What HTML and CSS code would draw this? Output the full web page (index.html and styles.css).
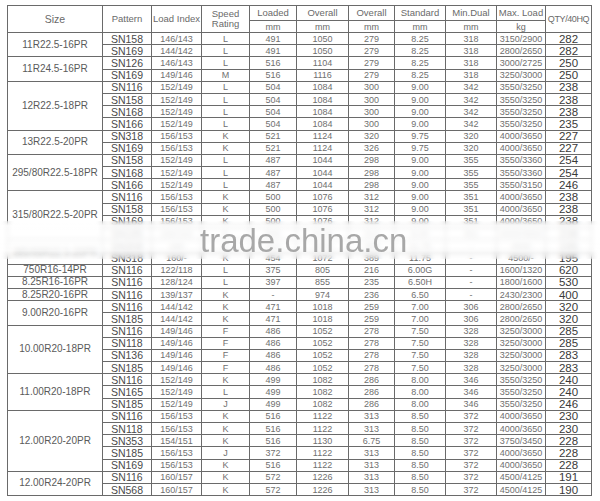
FILE: index.html
```html
<!DOCTYPE html>
<html>
<head>
<meta charset="utf-8">
<link rel="stylesheet" href="styles.css">
</head>
<body>
<div class="page">
<table class="spec">
<colgroup>
<col class="c-size"><col class="c-pat"><col class="c-li"><col class="c-sp"><col class="c-ld"><col class="c-ov1"><col class="c-ov2"><col class="c-std"><col class="c-md"><col class="c-ml"><col class="c-qty">
</colgroup>
<thead>
<tr class="h1">
<th rowspan="2" class="hsize">Size</th><th rowspan="2">Pattern</th><th rowspan="2">Load Index</th><th rowspan="2">Speed<br>Rating</th><th>Loaded</th><th>Overall</th><th>Overall</th><th>Standard</th><th>Min.Dual</th><th>Max. Load</th><th rowspan="2" class="hqty">QTY/40HQ</th>
</tr>
<tr class="h2"><th>mm</th><th>mm</th><th>mm</th><th>mm</th><th>mm</th><th>kg</th></tr>
</thead>
<tbody>
<tr><td rowspan="2" class="sz">11R22.5-16PR</td><td class="pt">SN158</td><td>146/143</td><td>L</td><td>491</td><td>1050</td><td>279</td><td>8.25</td><td>318</td><td>3150/2900</td><td class="q">282</td></tr>
<tr><td class="pt">SN169</td><td>144/142</td><td>L</td><td>491</td><td>1050</td><td>279</td><td>8.25</td><td>318</td><td>2800/2650</td><td class="q">282</td></tr>
<tr><td rowspan="2" class="sz">11R24.5-16PR</td><td class="pt">SN126</td><td>146/143</td><td>L</td><td>516</td><td>1104</td><td>279</td><td>8.25</td><td>318</td><td>3000/2725</td><td class="q">250</td></tr>
<tr><td class="pt">SN169</td><td>149/146</td><td>M</td><td>516</td><td>1116</td><td>279</td><td>8.25</td><td>318</td><td>3250/3000</td><td class="q">250</td></tr>
<tr><td rowspan="4" class="sz">12R22.5-18PR</td><td class="pt">SN116</td><td>152/149</td><td>L</td><td>504</td><td>1084</td><td>300</td><td>9.00</td><td>342</td><td>3550/3250</td><td class="q">238</td></tr>
<tr><td class="pt">SN158</td><td>152/149</td><td>L</td><td>504</td><td>1084</td><td>300</td><td>9.00</td><td>342</td><td>3550/3250</td><td class="q">238</td></tr>
<tr><td class="pt">SN168</td><td>152/149</td><td>L</td><td>504</td><td>1084</td><td>300</td><td>9.00</td><td>342</td><td>3550/3250</td><td class="q">238</td></tr>
<tr><td class="pt">SN166</td><td>152/149</td><td>L</td><td>504</td><td>1084</td><td>300</td><td>9.00</td><td>342</td><td>3550/3250</td><td class="q">235</td></tr>
<tr><td rowspan="2" class="sz">13R22.5-20PR</td><td class="pt">SN318</td><td>156/153</td><td>K</td><td>521</td><td>1124</td><td>320</td><td>9.75</td><td>320</td><td>4000/3650</td><td class="q">227</td></tr>
<tr><td class="pt">SN169</td><td>156/153</td><td>K</td><td>521</td><td>1124</td><td>326</td><td>9.75</td><td>320</td><td>4000/3650</td><td class="q">227</td></tr>
<tr><td rowspan="3" class="sz">295/80R22.5-18PR</td><td class="pt">SN158</td><td>152/149</td><td>L</td><td>487</td><td>1044</td><td>298</td><td>9.00</td><td>355</td><td>3550/3360</td><td class="q">254</td></tr>
<tr><td class="pt">SN168</td><td>152/149</td><td>L</td><td>487</td><td>1044</td><td>298</td><td>9.00</td><td>355</td><td>3550/3360</td><td class="q">254</td></tr>
<tr><td class="pt">SN166</td><td>152/149</td><td>L</td><td>487</td><td>1044</td><td>298</td><td>9.00</td><td>355</td><td>3550/3150</td><td class="q">246</td></tr>
<tr><td rowspan="4" class="sz">315/80R22.5-20PR</td><td class="pt">SN116</td><td>156/153</td><td>K</td><td>500</td><td>1076</td><td>312</td><td>9.00</td><td>351</td><td>4000/3650</td><td class="q">238</td></tr>
<tr><td class="pt">SN158</td><td>156/153</td><td>K</td><td>500</td><td>1076</td><td>312</td><td>9.00</td><td>351</td><td>4000/3650</td><td class="q">238</td></tr>
<tr><td class="pt">SN169</td><td>156/153</td><td>K</td><td>500</td><td>1076</td><td>312</td><td>9.00</td><td>351</td><td>4000/3650</td><td class="q">238</td></tr>
<tr><td class="pt">SN185</td><td>156/153</td><td>K</td><td>500</td><td>1076</td><td>312</td><td>9.00</td><td>351</td><td>4000/3650</td><td class="q">238</td></tr>
<tr><td rowspan="2" class="sz">385/65R22.5-20PR</td><td class="pt">SN308</td><td>160</td><td>K</td><td>454</td><td>1072</td><td>389</td><td>11.75</td><td>-</td><td>4500</td><td class="q">195</td></tr>
<tr><td class="pt">SN318</td><td>160/-</td><td>K</td><td>454</td><td>1072</td><td>389</td><td>11.75</td><td>-</td><td>4500/-</td><td class="q">195</td></tr>
<tr><td class="sz">750R16-14PR</td><td class="pt">SN116</td><td>122/118</td><td>L</td><td>375</td><td>805</td><td>216</td><td>6.00G</td><td>-</td><td>1600/1320</td><td class="q">620</td></tr>
<tr><td class="sz">8.25R16-16PR</td><td class="pt">SN116</td><td>128/124</td><td>L</td><td>397</td><td>855</td><td>235</td><td>6.50H</td><td>-</td><td>1800/1600</td><td class="q">530</td></tr>
<tr><td class="sz">8.25R20-16PR</td><td class="pt">SN116</td><td>139/137</td><td>K</td><td>-</td><td>974</td><td>236</td><td>6.50</td><td>-</td><td>2430/2300</td><td class="q">400</td></tr>
<tr><td rowspan="2" class="sz">9.00R20-16PR</td><td class="pt">SN116</td><td>144/142</td><td>K</td><td>471</td><td>1018</td><td>259</td><td>7.00</td><td>306</td><td>2800/2650</td><td class="q">320</td></tr>
<tr><td class="pt">SN185</td><td>144/142</td><td>K</td><td>471</td><td>1018</td><td>259</td><td>7.00</td><td>306</td><td>2800/2650</td><td class="q">320</td></tr>
<tr><td rowspan="4" class="sz">10.00R20-18PR</td><td class="pt">SN116</td><td>149/146</td><td>F</td><td>486</td><td>1052</td><td>278</td><td>7.50</td><td>328</td><td>3250/3000</td><td class="q">285</td></tr>
<tr><td class="pt">SN118</td><td>149/146</td><td>F</td><td>486</td><td>1052</td><td>278</td><td>7.50</td><td>328</td><td>3250/3000</td><td class="q">285</td></tr>
<tr><td class="pt">SN136</td><td>149/146</td><td>F</td><td>486</td><td>1052</td><td>278</td><td>7.50</td><td>328</td><td>3250/3000</td><td class="q">283</td></tr>
<tr><td class="pt">SN185</td><td>149/146</td><td>F</td><td>486</td><td>1052</td><td>278</td><td>7.50</td><td>328</td><td>3250/3000</td><td class="q">283</td></tr>
<tr><td rowspan="3" class="sz">11.00R20-18PR</td><td class="pt">SN116</td><td>152/149</td><td>K</td><td>499</td><td>1082</td><td>286</td><td>8.00</td><td>346</td><td>3550/3250</td><td class="q">240</td></tr>
<tr><td class="pt">SN165</td><td>152/149</td><td>L</td><td>499</td><td>1082</td><td>286</td><td>8.00</td><td>346</td><td>3550/3250</td><td class="q">240</td></tr>
<tr><td class="pt">SN185</td><td>152/149</td><td>J</td><td>499</td><td>1082</td><td>286</td><td>8.00</td><td>346</td><td>3550/3250</td><td class="q">246</td></tr>
<tr><td rowspan="5" class="sz">12.00R20-20PR</td><td class="pt">SN116</td><td>156/153</td><td>K</td><td>516</td><td>1122</td><td>313</td><td>8.50</td><td>372</td><td>4000/3650</td><td class="q">230</td></tr>
<tr><td class="pt">SN118</td><td>156/153</td><td>K</td><td>516</td><td>1122</td><td>313</td><td>8.50</td><td>372</td><td>4000/3650</td><td class="q">230</td></tr>
<tr><td class="pt">SN353</td><td>154/151</td><td>K</td><td>516</td><td>1130</td><td>6.75</td><td>8.50</td><td>372</td><td>3750/3450</td><td class="q">228</td></tr>
<tr><td class="pt">SN185</td><td>156/153</td><td>J</td><td>372</td><td>1122</td><td>313</td><td>8.50</td><td>372</td><td>4000/3650</td><td class="q">228</td></tr>
<tr><td class="pt">SN169</td><td>156/153</td><td>K</td><td>516</td><td>1122</td><td>313</td><td>8.50</td><td>372</td><td>4000/3650</td><td class="q">228</td></tr>
<tr><td rowspan="2" class="sz">12.00R24-20PR</td><td class="pt">SN116</td><td>160/157</td><td>K</td><td>572</td><td>1226</td><td>313</td><td>8.50</td><td>372</td><td>4500/4125</td><td class="q">191</td></tr>
<tr><td class="pt">SN568</td><td>160/157</td><td>K</td><td>572</td><td>1226</td><td>313</td><td>8.50</td><td>372</td><td>4500/4125</td><td class="q">190</td></tr>
</tbody>
</table>
<div class="wm-band"></div>
<div class="wm-text">trade.china.cn</div>
</div>
</body>
</html>
```

FILE: styles.css
```css
html, body {
  margin: 0;
  padding: 0;
  background: #fff;
}
.page {
  position: relative;
  width: 600px;
  height: 501px;
  overflow: hidden;
  padding: 5px 0 0 7px;
  box-sizing: border-box;
  font-family: "Liberation Sans", Arial, sans-serif;
  color: #555;
}
.spec {
  border-collapse: collapse;
  table-layout: fixed;
  width: 584px;
}
.c-size { width: 95px; }
.c-pat { width: 49px; }
.c-li { width: 50px; }
.c-sp { width: 48px; }
.c-ld { width: 47px; }
.c-ov1 { width: 52px; }
.c-ov2 { width: 46px; }
.c-std { width: 51px; }
.c-md { width: 51px; }
.c-ml { width: 49px; }
.c-qty { width: 46px; }
.spec th, .spec td {
  border: 1px solid #6a6a6a;
  padding: 0;
  text-align: center;
  white-space: nowrap;
  overflow: hidden;
}
.spec th {
  font-weight: normal;
  font-size: 9.5px;
  line-height: 10px;
  color: #6a6a6a;
}
.spec .hsize { font-size: 10.5px; }
.spec .hqty { font-size: 9px; letter-spacing: -0.4px; }
.h1 th { height: 14px; }
.h2 th { height: 11px; font-size: 9px; }
.spec td {
  font-size: 9px;
  line-height: 10px;
  height: 11.2px;
  color: #707070;
}
.spec td.sz { font-size: 10px; color: #5a5a5a; }
.spec td.pt { font-size: 10.5px; color: #4a4a4a; }
.spec td.q { font-size: 11.5px; color: #3a3a3a; }
.wm-band {
  position: absolute;
  left: 0;
  top: 221px;
  width: 600px;
  height: 38px;
  background: linear-gradient(to bottom, rgba(255,255,255,0) 0%, rgba(255,255,255,0.8) 12%, rgba(255,255,255,0.85) 50%, rgba(255,255,255,0.8) 78%, rgba(255,255,255,0.3) 92%, rgba(255,255,255,0) 100%);
  backdrop-filter: blur(2.5px);
}
.wm-text {
  position: absolute;
  left: 200px;
  top: 224px;
  font-family: "Liberation Sans", Arial, sans-serif;
  font-size: 33px;
  line-height: 33px;
  color: #a8a8a8;
  filter: blur(0.4px);
}
```
